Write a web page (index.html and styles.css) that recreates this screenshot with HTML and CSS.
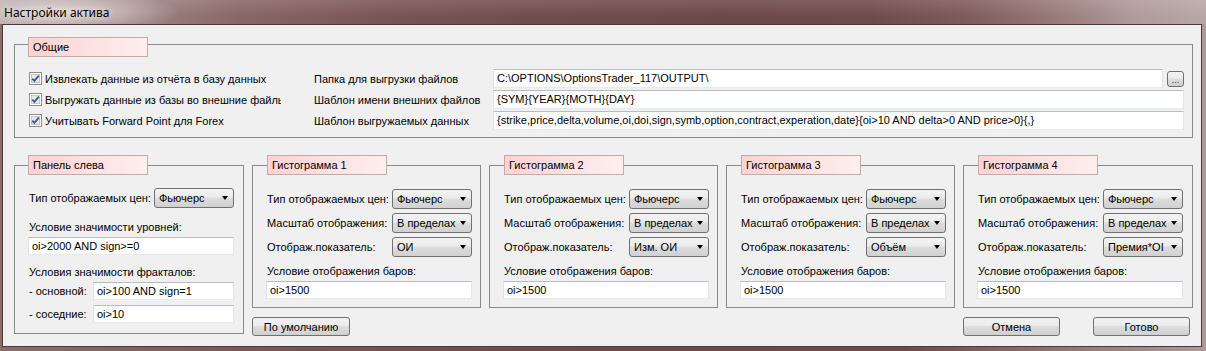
FILE: index.html
```html
<!DOCTYPE html>
<html lang="ru">
<head>
<meta charset="utf-8">
<title>Настройки актива</title>
<link rel="stylesheet" href="styles.css">
</head>
<body>
<div class="window">
  <div class="titlebar"><span class="title">Настройки актива</span></div>
  <div class="client">
    <section class="group general">
      <div class="group-head">Общие</div>
      <div class="group-body general-body">
        <div class="chk"><svg class="box" width="13" height="13" viewBox="0 0 13 13"><rect x="0.5" y="0.5" width="12" height="12" fill="#fff" stroke="#8e8f8f"/><rect x="2.5" y="2.5" width="8" height="8" fill="#e8e8e8" stroke="#c4c6c9"/><path d="M3.2 6.6 L5.4 8.9 L9.8 3.6" fill="none" stroke="#3a5c95" stroke-width="1.8"/></svg><span class="chk-text">Извлекать данные из отчёта в базу данных</span></div>
        <div class="lbl">Папка для выгрузки файлов</div>
        <div class="path-row"><div class="input wide">C:\OPTIONS\OptionsTrader_117\OUTPUT\</div><div class="btn dots">...</div></div>

        <div class="chk"><svg class="box" width="13" height="13" viewBox="0 0 13 13"><rect x="0.5" y="0.5" width="12" height="12" fill="#fff" stroke="#8e8f8f"/><rect x="2.5" y="2.5" width="8" height="8" fill="#e8e8e8" stroke="#c4c6c9"/><path d="M3.2 6.6 L5.4 8.9 L9.8 3.6" fill="none" stroke="#3a5c95" stroke-width="1.8"/></svg><span class="chk-text">Выгружать данные из базы во внешние файлы</span></div>
        <div class="lbl">Шаблон имени внешних файлов</div>
        <div class="input wide">{SYM}{YEAR}{MOTH}{DAY}</div>

        <div class="chk"><svg class="box" width="13" height="13" viewBox="0 0 13 13"><rect x="0.5" y="0.5" width="12" height="12" fill="#fff" stroke="#8e8f8f"/><rect x="2.5" y="2.5" width="8" height="8" fill="#e8e8e8" stroke="#c4c6c9"/><path d="M3.2 6.6 L5.4 8.9 L9.8 3.6" fill="none" stroke="#3a5c95" stroke-width="1.8"/></svg><span class="chk-text">Учитывать Forward Point для Forex</span></div>
        <div class="lbl">Шаблон выгружаемых данных</div>
        <div class="input wide">{strike,price,delta,volume,oi,doi,sign,symb,option,contract,experation,date}{oi&gt;10 AND delta&gt;0 AND price&gt;0}{,}</div>
      </div>
    </section>

    <div class="panels">
      <div class="col col-wide">
        <section class="group">
          <div class="group-head left-head">Панель слева</div>
          <div class="group-body left-body">
            <div class="field-row"><span class="field-label">Тип отображаемых цен:</span><div class="combo"><span class="combo-text">Фьючерс</span><span class="arrow"></span></div></div>
            <div class="cap cap-first">Условие значимости уровней:</div>
            <div class="input">oi&gt;2000 AND sign&gt;=0</div>
            <div class="cap cap-second">Условия значимости фракталов:</div>
            <div class="sub-row"><span class="sub-label">- основной:</span><div class="input sub-input">oi&gt;100 AND sign=1</div></div>
            <div class="sub-row sub-row-2"><span class="sub-label">- соседние:</span><div class="input sub-input">oi&gt;10</div></div>
          </div>
        </section>
      </div>

      <div class="col">
        <section class="group">
          <div class="group-head">Гистограмма 1</div>
          <div class="group-body hist-body">
            <div class="field-row"><span class="field-label">Тип отображаемых цен:</span><div class="combo"><span class="combo-text">Фьючерс</span><span class="arrow"></span></div></div>
            <div class="field-row"><span class="field-label">Масштаб отображения:</span><div class="combo"><span class="combo-text">В пределах</span><span class="arrow"></span></div></div>
            <div class="field-row"><span class="field-label">Отображ.показатель:</span><div class="combo"><span class="combo-text">ОИ</span><span class="arrow"></span></div></div>
            <div class="cap">Условие отображения баров:</div>
            <div class="input">oi&gt;1500</div>
          </div>
        </section>
        <div class="btn-row"><div class="btn push">По умолчанию</div></div>
      </div>

      <div class="col">
        <section class="group">
          <div class="group-head">Гистограмма 2</div>
          <div class="group-body hist-body">
            <div class="field-row"><span class="field-label">Тип отображаемых цен:</span><div class="combo"><span class="combo-text">Фьючерс</span><span class="arrow"></span></div></div>
            <div class="field-row"><span class="field-label">Масштаб отображения:</span><div class="combo"><span class="combo-text">В пределах</span><span class="arrow"></span></div></div>
            <div class="field-row"><span class="field-label">Отображ.показатель:</span><div class="combo"><span class="combo-text">Изм. ОИ</span><span class="arrow"></span></div></div>
            <div class="cap">Условие отображения баров:</div>
            <div class="input">oi&gt;1500</div>
          </div>
        </section>
      </div>

      <div class="col">
        <section class="group">
          <div class="group-head">Гистограмма 3</div>
          <div class="group-body hist-body">
            <div class="field-row"><span class="field-label">Тип отображаемых цен:</span><div class="combo"><span class="combo-text">Фьючерс</span><span class="arrow"></span></div></div>
            <div class="field-row"><span class="field-label">Масштаб отображения:</span><div class="combo"><span class="combo-text">В пределах</span><span class="arrow"></span></div></div>
            <div class="field-row"><span class="field-label">Отображ.показатель:</span><div class="combo"><span class="combo-text">Объём</span><span class="arrow"></span></div></div>
            <div class="cap">Условие отображения баров:</div>
            <div class="input">oi&gt;1500</div>
          </div>
        </section>
      </div>

      <div class="col col-wide">
        <section class="group">
          <div class="group-head">Гистограмма 4</div>
          <div class="group-body hist-body">
            <div class="field-row"><span class="field-label">Тип отображаемых цен:</span><div class="combo"><span class="combo-text">Фьючерс</span><span class="arrow"></span></div></div>
            <div class="field-row"><span class="field-label">Масштаб отображения:</span><div class="combo"><span class="combo-text">В пределах</span><span class="arrow"></span></div></div>
            <div class="field-row"><span class="field-label">Отображ.показатель:</span><div class="combo"><span class="combo-text">Премия*OI</span><span class="arrow"></span></div></div>
            <div class="cap">Условие отображения баров:</div>
            <div class="input">oi&gt;1500</div>
          </div>
        </section>
        <div class="btn-row btn-row-end"><div class="btn push small">Отмена</div><div class="btn push small">Готово</div></div>
      </div>
    </div>
  </div>
</div>
</body>
</html>
```

FILE: styles.css
```css
* { box-sizing: border-box; }
html, body { margin: 0; padding: 0; }
body {
  width: 1206px;
  height: 351px;
  overflow: hidden;
  font-family: "Liberation Sans", Arial, sans-serif;
  font-size: 11px;
  color: #000;
  background: #7a5a5a;
}
.window {
  width: 1206px;
  height: 351px;
  display: flex;
  flex-direction: column;
  background: linear-gradient(90deg, #8a6e6e 0%, #7a5858 20%, #6c4848 50%, #6e4a4a 75%, #927474 88%, #b09898 100%);
}
.titlebar {
  height: 24px;
  flex: none;
  display: flex;
  align-items: center;
  padding-left: 4px;
  background:
    radial-gradient(ellipse 120px 22px at 60px 12px, rgba(235,225,225,0.85), rgba(235,225,225,0) 100%),
    linear-gradient(180deg, rgba(255,255,255,0.12), rgba(255,255,255,0) 70%),
    linear-gradient(90deg, #b2a2a2 0%, #a08888 10%, #886666 20%, #7a5454 32%, #704c4c 45%, #6c4848 60%, #704a4a 72%, #7e5a5a 80%, #9a7c7c 88%, #b09a9a 94%, #b8a6a6 100%);
}
.title {
  font-family: "Noto Sans", "Open Sans", sans-serif;
  font-size: 12px;
  color: #000;
  text-shadow: 0 0 6px rgba(255,255,255,0.8);
}
.client {
  margin-left: 2px;
  width: 1200px;
  height: 323px;
  flex: none;
  border: 1px solid #4a3a3a;
  background: #f0f0f0;
  padding: 12px 8px 0 11px;
}
.group {
  display: flex;
  flex-direction: column;
}
.group-head {
  align-self: flex-start;
  position: relative;
  z-index: 1;
  width: 120px;
  height: 20px;
  margin: 0 0 -10px 15px;
  padding-left: 4px;
  line-height: 18px;
  border: 1px solid #c6a9a9;
  background: linear-gradient(90deg, #fcd2d2 0%, #fde2e2 55%, #fdeeee 100%);
  white-space: nowrap;
}
.general .group-head { margin: 0 0 -13px 14px; }
.left-head { margin-left: 14px; }
.group-body {
  border: 1px solid #8a8a8a;
}

/* General block */
.general-body {
  height: 94px;
  padding: 23px 8px 0 14px;
  display: grid;
  grid-template-columns: 285px 179px 1fr;
  grid-auto-rows: 21px;
  align-items: center;
}
.chk {
  display: flex;
  align-items: center;
  width: 252px;
  overflow: hidden;
  white-space: nowrap;
}
.box { flex: none; margin-right: 3px; }
.chk-text { white-space: nowrap; }
.lbl { white-space: nowrap; }
.path-row {
  display: flex;
  align-items: center;
  gap: 4px;
}
.path-row .input { flex: 1; }

.input {
  display: block;
  width: 206px;
  height: 18px;
  margin-top: 3px;
  padding-left: 3px;
  line-height: 16px;
  background: #fff;
  border: 1px solid;
  border-color: #b9bcc2 #e2e5ea #e6e9ee #dfe2e7;
  white-space: nowrap;
  overflow: hidden;
}
.input.wide {
  width: auto;
  height: 19px;
  margin-top: 0;
  line-height: 17px;
}

.btn {
  display: flex;
  align-items: center;
  justify-content: center;
  border: 1px solid #707070;
  border-radius: 3px;
  background: linear-gradient(180deg, #f3f3f3 0%, #ebebeb 45%, #dddddd 50%, #d0d0d0 100%);
  white-space: nowrap;
}
.dots {
  width: 17px;
  height: 16px;
  flex: none;
  font-size: 9px;
  line-height: 1;
  padding-top: 3px;
  color: #333;
}

/* Bottom panels */
.panels {
  display: flex;
  gap: 8px;
  margin-top: 17px;
}
.col {
  width: 229px;
  flex: none;
  display: flex;
  flex-direction: column;
}
.col-wide { width: 230px; }

.left-body {
  height: 169px;
  padding: 22px 0 0 13px;
}
.hist-body {
  height: 143px;
  padding: 23px 0 0 13px;
}
.field-row {
  display: flex;
  align-items: center;
  height: 20px;
}
.field-row + .field-row { margin-top: 4px; }
.field-label {
  width: 126px;
  flex: none;
  padding-left: 1px;
  white-space: nowrap;
}
.combo {
  width: 80px;
  height: 20px;
  display: flex;
  align-items: center;
  padding-left: 4px;
  border: 1px solid #707070;
  border-radius: 3px;
  background: linear-gradient(180deg, #f3f3f3 0%, #ebebeb 45%, #dddddd 50%, #d0d0d0 100%);
  white-space: nowrap;
  overflow: hidden;
}
.combo-text { flex: 1; overflow: hidden; }
.arrow {
  flex: none;
  width: 0;
  height: 0;
  margin-right: 5px;
  border-left: 3.5px solid transparent;
  border-right: 3.5px solid transparent;
  border-top: 4px solid #000;
}
.cap {
  height: 14px;
  line-height: 14px;
  margin-top: 7px;
  padding-left: 1px;
  white-space: nowrap;
}
.cap-first { margin-top: 12px; }
.cap-second { margin-top: 10px; }
.sub-row {
  display: flex;
  align-items: center;
  margin-top: 3px;
}
.sub-row-2 { margin-top: 5px; }
.sub-row .input.sub-input { width: 141px; margin-top: 0; }
.sub-label {
  width: 65px;
  flex: none;
  padding-left: 1px;
  white-space: nowrap;
}

.btn-row {
  display: flex;
  margin-top: 9px;
}
.btn-row-end { gap: 33px; }
.push {
  width: 98px;
  height: 19px;
}
.push.small { width: 97px; }
```
